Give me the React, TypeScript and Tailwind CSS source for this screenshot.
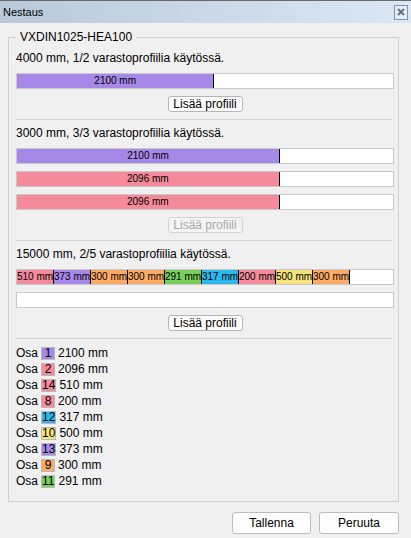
const PURPLE = 'bg-[#a688e8]'
const PINK = 'bg-[#f48a9a]'
const ORANGE = 'bg-[#fcaa66]'
const GREEN = 'bg-[#78cf5a]'
const BLUE = 'bg-[#2bb8ee]'
const YELLOW = 'bg-[#f4e27c]'

type Piece = { len: number; color: string }

type Stock = {
    length: number
    used: number
    total: number
    bars: Piece[][]
    fixed?: boolean
    canAdd: boolean
}

const stocks: Stock[] = [
    { length: 4000, used: 1, total: 2, bars: [[{ len: 2100, color: PURPLE }]], canAdd: true },
    {
        length: 3000,
        used: 3,
        total: 3,
        bars: [[{ len: 2100, color: PURPLE }], [{ len: 2096, color: PINK }], [{ len: 2096, color: PINK }]],
        canAdd: false,
    },
    {
        length: 15000,
        used: 2,
        total: 5,
        fixed: true,
        bars: [
            [
                { len: 510, color: PINK },
                { len: 373, color: PURPLE },
                { len: 300, color: ORANGE },
                { len: 300, color: ORANGE },
                { len: 291, color: GREEN },
                { len: 317, color: BLUE },
                { len: 200, color: PINK },
                { len: 500, color: YELLOW },
                { len: 300, color: ORANGE },
            ],
            [],
        ],
        canAdd: true,
    },
]

const parts = [
    { id: 1, len: 2100, color: PURPLE },
    { id: 2, len: 2096, color: PINK },
    { id: 14, len: 510, color: PINK },
    { id: 8, len: 200, color: PINK },
    { id: 12, len: 317, color: BLUE },
    { id: 10, len: 500, color: YELLOW },
    { id: 13, len: 373, color: PURPLE },
    { id: 9, len: 300, color: ORANGE },
    { id: 11, len: 291, color: GREEN },
]

function Bar({ pieces, length, fixed }: { pieces: Piece[]; length: number; fixed?: boolean }) {
    return (
        <div className="flex h-[16px] overflow-hidden border border-[#c9c9c9] bg-white">
            {pieces.map((p, i) =>
                fixed ? (
                    <div
                        key={i}
                        className={`h-full w-[37px] shrink-0 overflow-hidden whitespace-nowrap border-r border-black text-[10px] leading-[14px] ${p.color}`}
                    >
                        {p.len} mm
                    </div>
                ) : (
                    <div
                        key={i}
                        className={`h-full shrink-0 overflow-hidden whitespace-nowrap border-r border-black text-center text-[10px] leading-[14px] ${p.color}`}
                        style={{ width: `${(p.len / length) * 100}%` }}
                    >
                        {p.len} mm
                    </div>
                )
            )}
        </div>
    )
}

function AddButton({ disabled }: { disabled?: boolean }) {
    return (
        <button
            disabled={disabled}
            className={
                disabled
                    ? 'h-[16px] w-[75px] rounded-[3px] border border-[#d3d3d3] bg-[#f4f4f4] text-[12px] leading-[14px] text-[#a8a8a8]'
                    : 'h-[16px] w-[75px] rounded-[3px] border border-[#b5b5b5] bg-[#fcfcfc] text-[12px] leading-[14px] text-black'
            }
        >
            Lisää profiili
        </button>
    )
}

export default function App() {
    return (
        <div className="h-[538px] w-[411px] overflow-hidden bg-[#f0f0f0] text-black [font-family:'Liberation_Sans',Arial,sans-serif]">
            {/* title bar */}
            <div className="flex h-[23px] items-center justify-between border-t border-[#6a6a6a] bg-gradient-to-r from-[#b9c9da] to-[#dbe7f4] pl-[3px] pr-[3px]">
                <span className="text-[11px] leading-[13px]">Nestaus</span>
                <div className="flex h-[15px] w-[14px] items-center justify-center border border-[#8593a4] bg-[#e4edf7]">
                    <svg width="8" height="8" viewBox="0 0 8 8">
                        <path d="M1 1L7 7M7 1L1 7" stroke="#67717f" strokeWidth="2" />
                    </svg>
                </div>
            </div>

            <fieldset className="ml-2 mt-[7px] w-[391px] border border-[#d0d0d0] pb-[12px] pl-[7px] pr-[4px]">
                <legend className="px-1 text-[12px] leading-[15px]">VXDIN1025-HEA100</legend>

                {stocks.map((s, i) => (
                    <div key={i}>
                        <div className="pb-[7px] pt-[6px]">
                            <div className="text-[12px] leading-[15px]">
                                {s.length} mm, {s.used}/{s.total} varastoprofiilia käytössä.
                            </div>
                            <div className="mt-[7px] flex flex-col gap-[7px]">
                                {s.bars.map((b, j) => (
                                    <Bar key={j} pieces={b} length={s.length} fixed={s.fixed} />
                                ))}
                            </div>
                            <div className="mt-[7px] flex justify-center">
                                <AddButton disabled={!s.canAdd} />
                            </div>
                        </div>
                        <div className="mr-[2px] h-px bg-[#d0d0d0]" />
                    </div>
                ))}

                {/* part legend */}
                <div className="pt-[6px] text-[12px]">
                    {parts.map((p) => (
                        <div key={p.id} className="flex h-[16px] items-center whitespace-nowrap">
                            <span>Osa</span>
                            <span
                                className={`ml-[3px] flex h-[13px] min-w-[14px] items-center justify-center border border-[#b9b9b9] text-[12px] leading-[11px] ${p.color}`}
                            >
                                {p.id}
                            </span>
                            <span className="ml-[3px]">{p.len} mm</span>
                        </div>
                    ))}
                </div>
            </fieldset>

            <div className="mt-[10px] flex justify-end gap-2 pr-3">
                <button className="h-[22px] w-[79px] rounded-[3px] border border-[#bcbcbc] bg-[#fdfdfd] text-[12px]">
                    Tallenna
                </button>
                <button className="h-[22px] w-[80px] rounded-[3px] border border-[#bcbcbc] bg-[#fdfdfd] text-[12px]">
                    Peruuta
                </button>
            </div>
        </div>
    )
}
